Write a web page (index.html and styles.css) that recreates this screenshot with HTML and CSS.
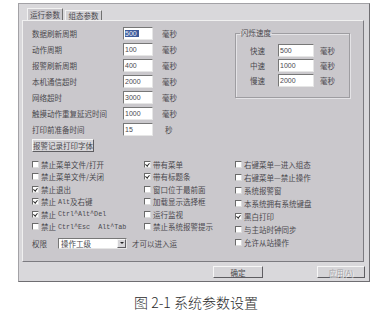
FILE: index.html
```html
<!DOCTYPE html>
<html>
<head>
<meta charset="utf-8">
<title>系统参数设置</title>
<link rel="stylesheet" href="styles.css">
</head>
<body>
<div class="dialog">
  <div class="tabs">
    <div class="tab active">运行参数</div>
    <div class="tab">组态参数</div>
  </div>
  <div class="sheet">
    <div class="top">
      <div class="params">
        <div class="row"><span class="label">数据刷新周期</span><span class="field"><span class="sel">500</span></span><span class="unit">毫秒</span></div>
        <div class="row"><span class="label">动作周期</span><span class="field">100</span><span class="unit">毫秒</span></div>
        <div class="row"><span class="label">报警刷新周期</span><span class="field">400</span><span class="unit">毫秒</span></div>
        <div class="row"><span class="label">本机通信超时</span><span class="field">2000</span><span class="unit">毫秒</span></div>
        <div class="row"><span class="label">网络超时</span><span class="field">3000</span><span class="unit">毫秒</span></div>
        <div class="row"><span class="label">触摸动作重复延迟时间</span><span class="field">1000</span><span class="unit">毫秒</span></div>
        <div class="row"><span class="label">打印前准备时间</span><span class="field">15</span><span class="unit sec">秒</span></div>
        <div class="btn font-btn">报警记录打印字体</div>
      </div>
      <fieldset class="flash">
        <legend>闪烁速度</legend>
        <div class="frow"><span class="flabel">快速</span><span class="field wide">500</span><span class="unit">毫秒</span></div>
        <div class="frow"><span class="flabel">中速</span><span class="field wide">1000</span><span class="unit">毫秒</span></div>
        <div class="frow"><span class="flabel">慢速</span><span class="field wide">2000</span><span class="unit">毫秒</span></div>
      </fieldset>
    </div>
    <div class="options">
      <div class="opt-left">
        <div class="opt-cols">
          <div class="col c1">
            <div class="check"><span class="box"></span>禁止菜单文件/打开</div>
            <div class="check"><span class="box"></span>禁止菜单文件/关闭</div>
            <div class="check"><span class="box on"></span>禁止退出</div>
            <div class="check"><span class="box on"></span>禁止 <span class="mono">Alt</span>及右键</div>
            <div class="check"><span class="box on"></span>禁止 <span class="mono">Ctrl^Alt^Del</span></div>
            <div class="check"><span class="box"></span>禁止 <span class="mono">Ctrl^Esc&nbsp;&nbsp;Alt^Tab</span></div>
          </div>
          <div class="col c2">
            <div class="check"><span class="box on"></span>带有菜单</div>
            <div class="check"><span class="box on"></span>带有标题条</div>
            <div class="check"><span class="box"></span>窗口位于最前面</div>
            <div class="check"><span class="box"></span>加载显示选择框</div>
            <div class="check"><span class="box"></span>运行监视</div>
            <div class="check"><span class="box"></span>禁止系统报警提示</div>
          </div>
        </div>
        <div class="perm">
          <span class="perm-label">权限</span>
          <span class="combo"><span class="combo-text">操作工级</span><span class="combo-btn"><span class="arrow"></span></span></span>
          <span class="perm-note">才可以进入运</span>
        </div>
      </div>
      <div class="col c3">
        <div class="check"><span class="box"></span>右键菜单—进入组态</div>
        <div class="check"><span class="box"></span>右键菜单—禁止操作</div>
        <div class="check"><span class="box"></span>系统报警窗</div>
        <div class="check"><span class="box"></span>本系统拥有系统键盘</div>
        <div class="check"><span class="box on"></span>黑白打印</div>
        <div class="check"><span class="box"></span>与主站时钟同步</div>
        <div class="check"><span class="box"></span>允许从站操作</div>
      </div>
    </div>
  </div>
  <div class="footer">
    <div class="btn ok">确定</div>
    <div class="btn disabled">应用(A)</div>
  </div>
</div>
<div class="caption">图 2-1 系统参数设置</div>
</body>
</html>
```

FILE: styles.css
```css
html, body {
    margin: 0;
    padding: 0;
    background: #fff;
}

body {
    font-family: "Noto Sans CJK SC", sans-serif;
    font-size: 7.5px;
    color: #4a494e;
    width: 392px;
}

.dialog {
    width: 350px;
    margin: 3px 0 0 18px;
    background: #d9d8db;
    border: 1px solid #a3a2a6;
    border-right-color: #6f6e72;
    border-bottom-color: #6f6e72;
}

.tabs {
    height: 16px;
    display: flex;
    align-items: flex-end;
    padding-left: 8px;
}

.tab {
    box-sizing: border-box;
    width: 37px;
    height: 10px;
    line-height: 9px;
    text-align: center;
    border: 1px solid #f2f2f2;
    border-right-color: #707070;
    border-bottom: none;
    background: #d3d2d5;
}

.tab.active {
    width: 36px;
    height: 12px;
    line-height: 11px;
    background: #cac8cc;
    margin-right: 2px;
}

.sheet {
    box-sizing: border-box;
    width: 342px;
    height: 242px;
    margin-left: 3px;
    padding: 4px 0 0 9px;
    background: #cac8cc;
    border: 1px solid #f0f0f0;
    border-right-color: #7c7b80;
    border-bottom-color: #7c7b80;
}

.top {
    display: flex;
    align-items: flex-start;
}

.params {
    width: 203px;
}

.row {
    display: flex;
    align-items: center;
    height: 16px;
}

.label {
    width: 91px;
}

.field {
    box-sizing: border-box;
    width: 30px;
    height: 13px;
    padding-left: 1px;
    background: #fff;
    border: 1px solid #e6e6e6;
    border-top-color: #777;
    border-left-color: #777;
    font-family: "Liberation Sans", sans-serif;
    font-size: 7px;
    line-height: 11px;
}

.field.wide {
    width: 36px;
}

.sel {
    background: #3d5b9c;
    color: #e8ecf6;
    padding-right: 2px;
}

.unit {
    margin-left: 9px;
}

.unit.sec {
    margin-left: 12px;
}

.btn {
    box-sizing: border-box;
    display: flex;
    align-items: center;
    justify-content: center;
    background: #d6d5d8;
    border: 1px solid #f6f6f6;
    border-right-color: #5e5d61;
    border-bottom-color: #5e5d61;
}

.font-btn {
    width: 62px;
    height: 13px;
    margin-top: 2px;
}

.flash {
    box-sizing: border-box;
    width: 115px;
    height: 70px;
    margin: 3px 0 0 0;
    padding: 4.5px 0 0 4px;
    border: 1px solid #9e9da1;
    box-shadow: inset 1px 1px 0 #e4e3e6, 1px 1px 0 #e4e3e6;
}

.flash legend {
    padding: 0 1px;
    line-height: 10px;
}

.frow {
    display: flex;
    align-items: center;
    height: 15px;
    padding-left: 10px;
}

.flabel {
    width: 28px;
}

.frow .unit {
    margin-left: 6px;
}

.options {
    display: flex;
    margin-top: 6px;
}

.opt-left {
    width: 203px;
}

.opt-cols {
    display: flex;
}

.c1 {
    width: 112px;
}

.c2 {
    width: 91px;
}

.check {
    display: flex;
    align-items: center;
    height: 12.5px;
    white-space: nowrap;
}

.c3 .check {
    height: 13px;
}

.box {
    box-sizing: border-box;
    width: 7px;
    height: 7px;
    margin-right: 2px;
    background: #fff;
    border: 1px solid #dcdcdc;
    border-top-color: #6a6a6a;
    border-left-color: #6a6a6a;
    display: flex;
    align-items: center;
    justify-content: center;
}

.box.on::after {
    content: "";
    width: 1.5px;
    height: 3px;
    margin-top: -1px;
    border-right: 1.3px solid #2a2a2a;
    border-bottom: 1.3px solid #2a2a2a;
    transform: rotate(40deg);
}

.mono {
    font-family: "Liberation Mono", monospace;
    font-size: 6.7px;
    margin-left: 2px;
}

.perm {
    display: flex;
    align-items: center;
    height: 12px;
    margin-top: 4px;
}

.perm-label {
    width: 26px;
}

.combo {
    box-sizing: border-box;
    display: flex;
    width: 69px;
    height: 11px;
    background: #fff;
    border: 1px solid #e6e6e6;
    border-top-color: #777;
    border-left-color: #777;
}

.combo-text {
    flex: 1;
    padding-left: 2px;
    line-height: 9px;
}

.combo-btn {
    box-sizing: border-box;
    width: 9px;
    display: flex;
    align-items: center;
    justify-content: center;
    background: #d6d5d8;
    border: 1px solid #f6f6f6;
    border-right-color: #5e5d61;
    border-bottom-color: #5e5d61;
}

.arrow {
    width: 0;
    height: 0;
    border-left: 2px solid transparent;
    border-right: 2px solid transparent;
    border-top: 2px solid #222;
}

.perm-note {
    margin-left: 5px;
}

.footer {
    box-sizing: border-box;
    height: 19px;
    display: flex;
    justify-content: flex-end;
    align-items: flex-start;
    gap: 54px;
    padding: 4px 4px 0 0;
}

.footer .btn {
    height: 12px;
}

.ok {
    width: 50px;
}

.disabled {
    width: 48px;
    color: #a4a3a7;
    text-shadow: 1px 1px 0 #f4f4f4;
}

.caption {
    margin-top: 10px;
    text-align: center;
    font-size: 14px;
    font-weight: 300;
    line-height: 20px;
    color: #2a2a2a;
}
```
